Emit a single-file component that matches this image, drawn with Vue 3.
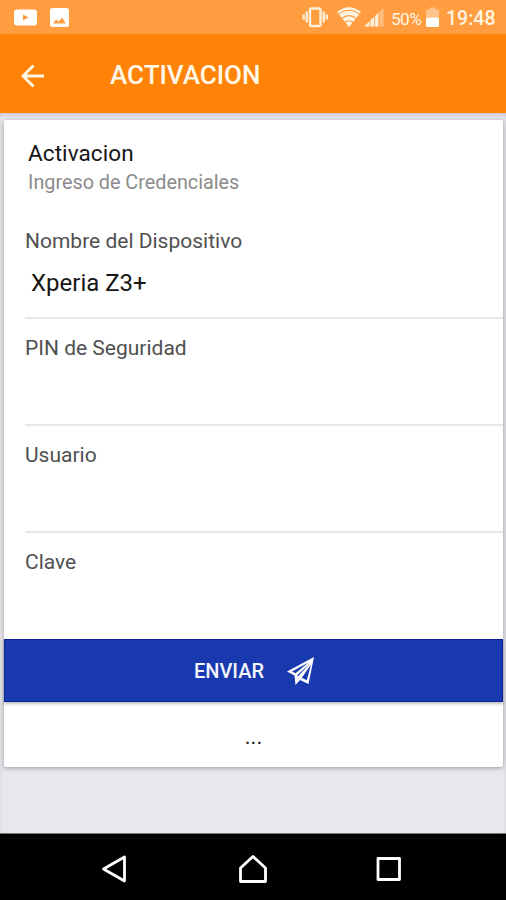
<template>
  <div class="screen">
    <div class="status-bar">
      <svg class="status-icons" width="56" height="34" viewBox="0 0 56 34">
        <rect x="0" y="9.5" width="23" height="16" rx="3" fill="#fff" />
        <path d="M9 14.5v6l5.5-3z" fill="#ff9d40" />
        <rect x="36" y="8" width="19" height="19" rx="2.5" fill="#fff" />
        <path d="M39 23.5l3-4 3 2 3-4 4 6z" fill="#ff9d40" />
      </svg>
      <div class="status-right">
        <svg width="82" height="34" viewBox="0 0 82 34" class="signals">
          <g fill="none" stroke="#ffefd6" stroke-width="2.4">
            <rect x="8" y="8.5" width="10.5" height="17.5" rx="1.5" />
            <path d="M4.800 11.500v11M21.700 11.500v11M1.700 14.500v5M24.800 14.500v5" />
          </g>
          <path d="M35 12Q47 2.500 59 12L47 27z" fill="#fff4e2" />
          <g fill="none" stroke="#ff9d40" stroke-width="1.2">
            <path d="M36 14.500q11-8.500 22 0M39.500 18.700q7.500-6 15 0M42.500 22.500q4.500-3.500 9 0" />
          </g>
          <path d="M81.500 8v18.500H62z" fill="#ffbd80" />
          <path d="M76.500 12.700v13.800H62z" fill="#fff0dc" />
          <path d="M68 20v7M72.500 16v11M77 12v15" stroke="#ff9d40" stroke-width="0.8" />
        </svg>
        <span class="percent">50%</span>
        <svg class="battery" width="14" height="34" viewBox="0 0 14 34">
          <path d="M3.5 7.5h6v2H13v8H0v-8h3.500z" fill="#ffc38b" />
          <rect x="0" y="17.5" width="13" height="9.5" rx="1" fill="#fff" />
        </svg>
        <span class="clock">19:48</span>
      </div>
    </div>

    <header class="toolbar">
      <svg class="back" width="24" height="24" viewBox="0 0 24 24">
        <path d="M23 12H2.500M12.500 1.500L2 12l10.500 10.500" fill="none" stroke="#fff8e8" stroke-width="2.8" />
      </svg>
      <h1>ACTIVACION</h1>
    </header>

    <main class="content">
      <div class="card">
        <div class="card-header">
          <h2>Activacion</h2>
          <p>Ingreso de Credenciales</p>
        </div>
        <label v-for="field in fields" :key="field.name" class="field">
          <span class="field-label">{{ field.label }}</span>
          <input v-model="field.value" :type="field.type" :name="field.name" />
        </label>
        <button class="send" type="button">
          <span>ENVIAR</span>
          <svg width="28" height="28" viewBox="0 0 28 28">
            <path d="M27 0L0 14.500l7.500 4L8.500 28l4.500-5 8.500 4z" fill="#fff" />
            <path d="M21.500 5.500L5 14.500l3.500 1.800zM23.500 6L10.500 18l.2 1.800zM24 7.500L14.800 20.700l5 2.500z" fill="#193aae" />
          </svg>
        </button>
        <div class="message">...</div>
      </div>
    </main>

    <nav class="nav-bar">
      <svg width="28" height="30" viewBox="0 0 28 30">
        <path d="M23.500 3v24L2.500 15z" />
      </svg>
      <svg width="30" height="30" viewBox="0 0 30 30">
        <path d="M15 2.500L27.500 14v13.500h-25V14z" />
      </svg>
      <svg width="26" height="30" viewBox="0 0 26 30">
        <rect x="2" y="4.500" width="21.500" height="21" />
      </svg>
    </nav>
  </div>
</template>

<script setup>
import { ref } from 'vue'

const fields = ref([
  { name: 'device', label: 'Nombre del Dispositivo', type: 'text', value: 'Xperia Z3+' },
  { name: 'pin', label: 'PIN de Seguridad', type: 'password', value: '' },
  { name: 'user', label: 'Usuario', type: 'text', value: '' },
  { name: 'password', label: 'Clave', type: 'password', value: '' }
])
</script>

<style>
body {
  margin: 0;
}
</style>

<style scoped>
* {
  box-sizing: border-box;
}

.screen {
  display: flex;
  flex-direction: column;
  width: 506px;
  height: 900px;
  overflow: hidden;
  background: #e8e7ed;
  font-family: Roboto, sans-serif;
}

.status-bar {
  display: flex;
  justify-content: space-between;
  height: 34px;
  padding: 0 10px 0 14px;
  background: #ff9d40;
}

.status-right {
  display: flex;
  align-items: center;
  height: 34px;
  color: #fff4e2;
}

.signals {
  margin-right: 7px;
}

.percent {
  width: 35px;
  padding-top: 3px;
  font-size: 17.3px;
  letter-spacing: -0.6px;
  line-height: 24px;
}

.battery {
  margin-right: 6px;
}

.clock {
  width: 50px;
  padding-top: 3px;
  font-size: 19.5px;
  font-weight: 500;
  line-height: 24px;
}

.toolbar {
  display: flex;
  align-items: center;
  height: 79px;
  padding: 4px 21px 0;
  background: #ff8307;
  color: #fff8e8;
}

.toolbar h1 {
  margin: -1px 0 0 65px;
  font-size: 26px;
  font-weight: 500;
  line-height: 32px;
}

.content {
  flex: 1;
  padding: 7px 3px 0 4px;
  box-shadow: inset 0 3px 4px -1px #c9c6ca;
}

.card {
  height: 647px;
  background: #fff;
  border-radius: 2px;
  box-shadow: 0 1px 4px rgba(0, 0, 0, 0.35);
}

.card-header {
  height: 92px;
  padding: 18px 24px 0;
}

.card-header h2 {
  margin: 0;
  color: #161616;
  font-size: 22.5px;
  font-weight: 400;
  letter-spacing: 0.1px;
  line-height: 30px;
}

.card-header p {
  margin: 0;
  color: #8b8b8b;
  font-size: 19.8px;
  line-height: 29px;
}

.field {
  display: flex;
  flex-direction: column;
  height: 107px;
  margin-left: 21px;
  padding-top: 16px;
  border-bottom: 2px solid #e8e8e8;
}

.field:nth-of-type(4) {
  height: 106px;
  border-bottom: none;
}

.field-label {
  color: #505050;
  font-size: 21px;
  line-height: 26px;
}

.field input {
  height: 38px;
  margin-top: 10px;
  padding: 0 6px;
  border: 0;
  outline: 0;
  background: transparent;
  color: #161616;
  font-family: inherit;
  font-size: 24px;
}

.send {
  display: flex;
  align-items: center;
  justify-content: center;
  gap: 23px;
  width: 100%;
  height: 63px;
  padding: 1px 0 0 2px;
  border: 1px solid #0b219d;
  background: #193aae;
  box-shadow: 0 2px 3px rgba(0, 0, 0, 0.25);
  color: #f4f5ff;
  font-family: inherit;
  font-size: 20px;
  font-weight: 500;
}

.message {
  height: 65px;
  color: #222;
  font-size: 22px;
  line-height: 70px;
  text-align: center;
}

.nav-bar {
  display: flex;
  align-items: center;
  justify-content: space-between;
  height: 67px;
  padding: 4px 104px 0 101px;
  border-top: 1px solid #777;
  background: #000;
}

.nav-bar svg {
  fill: none;
  stroke: #fff;
  stroke-width: 2.8;
  stroke-linejoin: round;
}
</style>
